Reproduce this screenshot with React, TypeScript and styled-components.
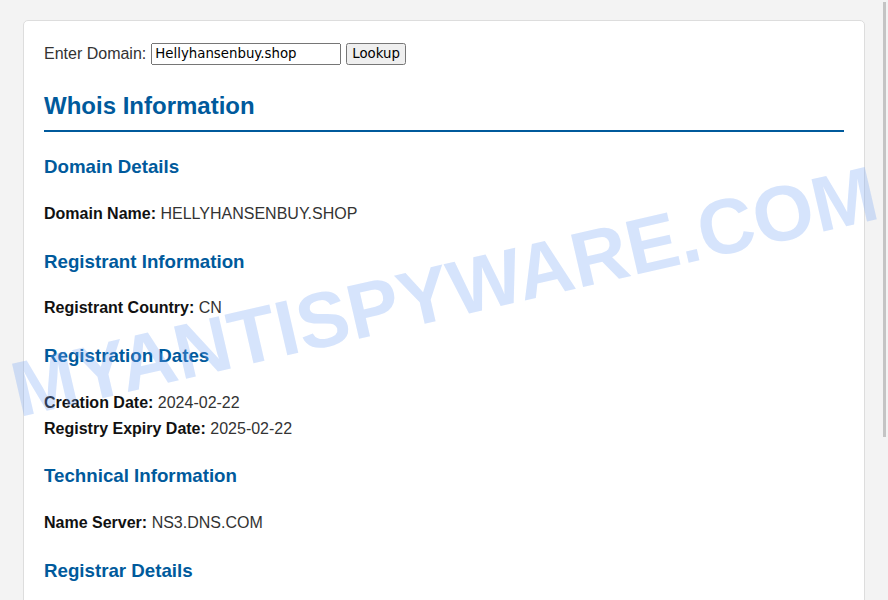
import styled, { createGlobalStyle } from "styled-components";

const GlobalStyle = createGlobalStyle`
    html, body {
        margin: 0;
        padding: 0;
        height: 100%;
        overflow: hidden;
    }
    body {
        background: #f3f3f3;
        font-family: "Liberation Sans", Arial, sans-serif;
        color: #333333;
        line-height: 1.6;
    }
`;

const Page = styled.div`
    position: relative;
    padding: 20px 23px;
    min-height: 100vh;
    box-sizing: border-box;
`;

const Card = styled.div`
    background: #ffffff;
    border: 1px solid #dddddd;
    border-radius: 5px;
    padding: 20px 20px 40px;
`;

const LookupForm = styled.form`
    display: flex;
    align-items: center;
    gap: 4px;
    font-size: 16px;
    color: #333333;
`;

const DomainInput = styled.input`
    width: 190px;
    height: 22px;
    box-sizing: border-box;
    margin-left: 1px;
    font-family: "DejaVu Sans", Verdana, sans-serif;
    font-size: 13.33px;
`;

const LookupButton = styled.button`
    margin-left: 1px;
    height: 22px;
    padding: 1px 4px;
    font-family: "DejaVu Sans", Verdana, sans-serif;
    font-size: 13.33px;
`;

const Title = styled.h2`
    color: #005a9c;
    font-size: 24px;
    margin: 20px 0 0;
    padding-bottom: 5px;
    border-bottom: 2px solid #005a9c;
`;

const SectionTitle = styled.h3`
    color: #005a9c;
    font-size: 18.72px;
    margin: 20px 0 19px;
`;

const Block = styled.div`
    font-size: 16px;
    margin: 19px 0 20px;
`;

const Label = styled.strong`
    color: #111111;
`;

const Watermark = styled.div`
    position: absolute;
    left: 13px;
    top: 352px;
    font-family: "Liberation Sans", Arial, sans-serif;
    font-weight: bold;
    font-size: 78px;
    line-height: 1;
    color: rgba(120, 165, 245, 0.3);
    transform: rotate(-13deg);
    transform-origin: left center;
    pointer-events: none;
    white-space: nowrap;
`;

const ScrollThumb = styled.div`
    position: absolute;
    right: 2px;
    top: 2px;
    width: 3px;
    height: 435px;
    background: #c4c4c4;
`;

const sections: { title: string; rows: [string, string][] }[] = [
    { title: "Domain Details", rows: [["Domain Name", "HELLYHANSENBUY.SHOP"]] },
    { title: "Registrant Information", rows: [["Registrant Country", "CN"]] },
    {
        title: "Registration Dates",
        rows: [
            ["Creation Date", "2024-02-22"],
            ["Registry Expiry Date", "2025-02-22"],
        ],
    },
    { title: "Technical Information", rows: [["Name Server", "NS3.DNS.COM"]] },
    { title: "Registrar Details", rows: [["Registrar", "DNS.COM"]] },
];

const App = () => {
    return (
        <Page>
            <GlobalStyle />
            <Card>
                <LookupForm onSubmit={(e) => e.preventDefault()}>
                    <span>Enter Domain:</span>
                    <DomainInput defaultValue="Hellyhansenbuy.shop" />
                    <LookupButton type="submit">Lookup</LookupButton>
                </LookupForm>
                <Title>Whois Information</Title>
                {sections.map((s) => (
                    <div key={s.title}>
                        <SectionTitle>{s.title}</SectionTitle>
                        <Block>
                            {s.rows.map(([k, v]) => (
                                <div key={k}>
                                    <Label>{k}:</Label> {v}
                                </div>
                            ))}
                        </Block>
                    </div>
                ))}
            </Card>
            <Watermark>MYANTISPYWARE.COM</Watermark>
            <ScrollThumb />
        </Page>
    );
};

export default App;
